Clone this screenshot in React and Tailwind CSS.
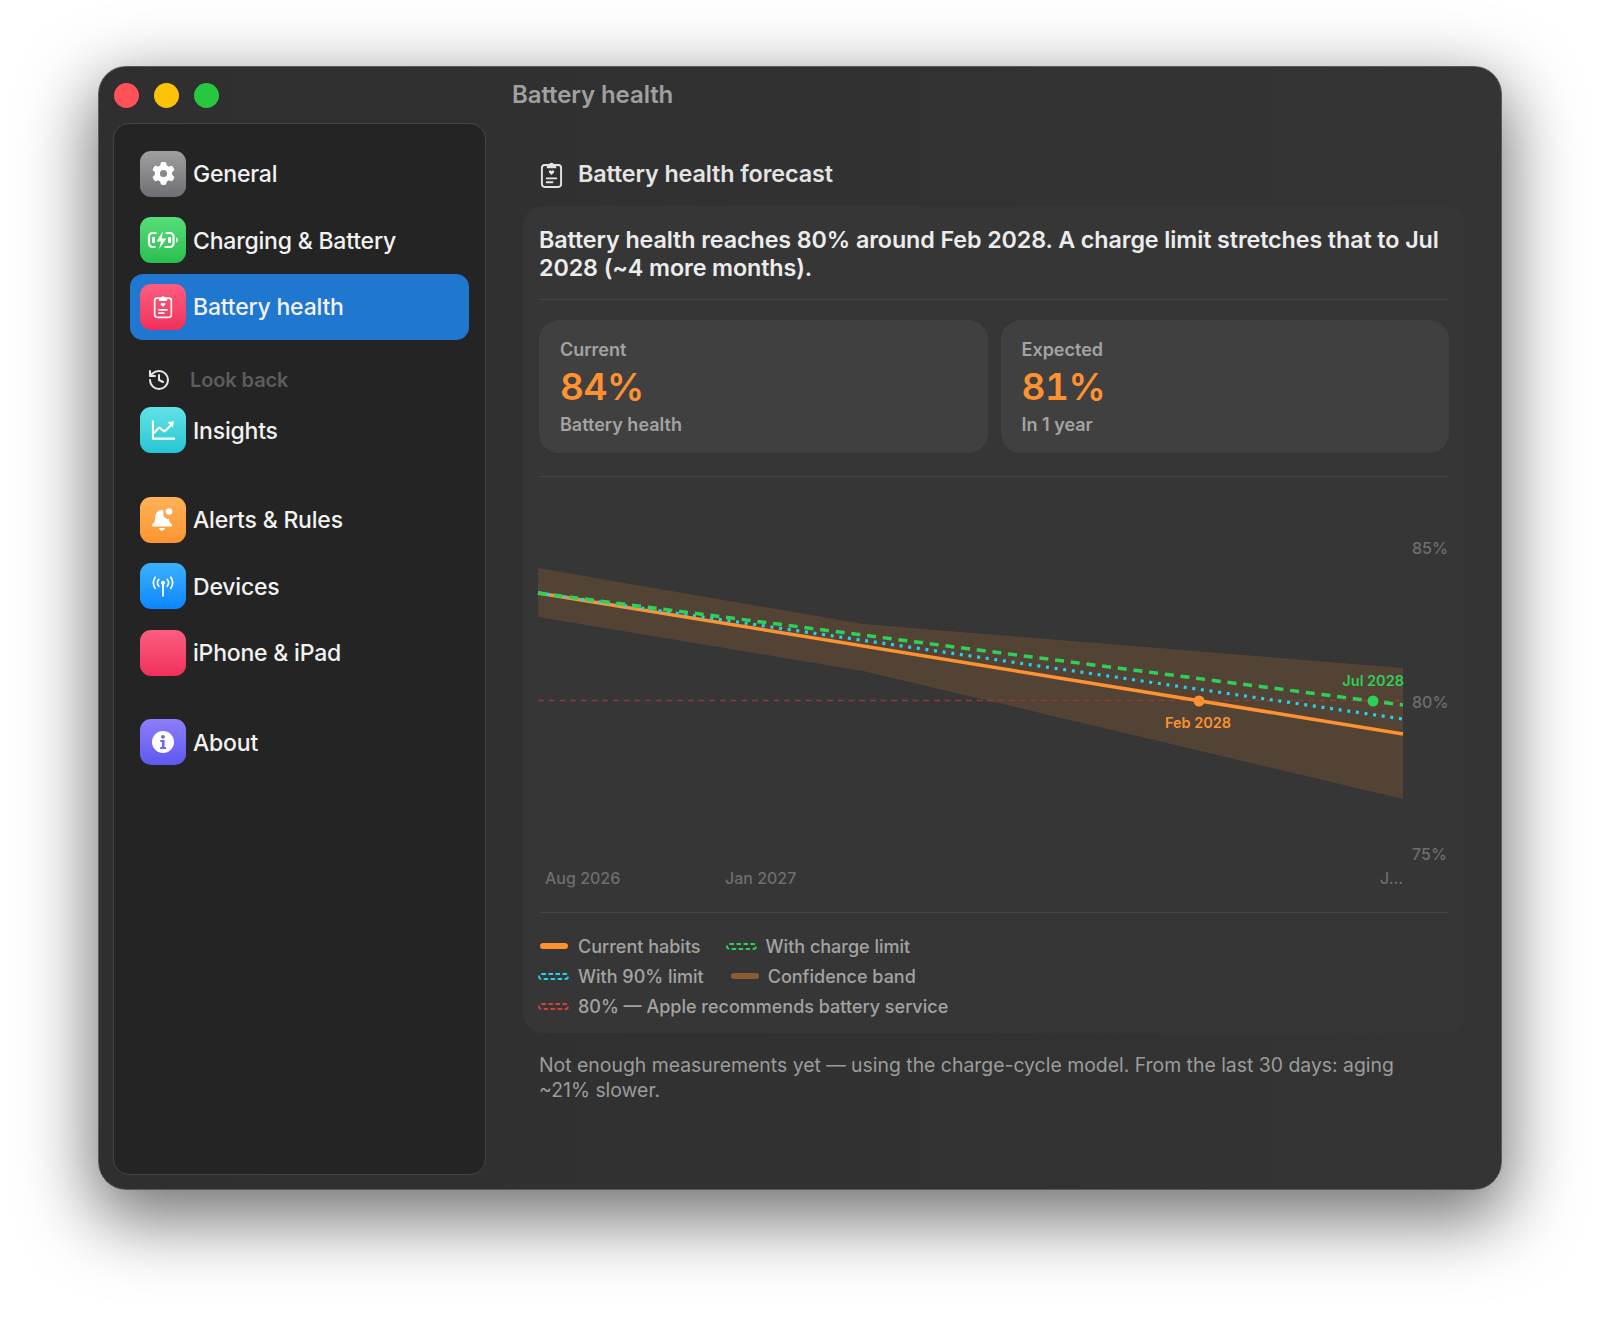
import React from "react";
import { FaGear } from "react-icons/fa6";
import { History } from "lucide-react";

const ClipboardHeart = ({ className = "w-[24px] h-[30px]" }) => (
  <svg viewBox="0 0 24 30" className={className} fill="none" stroke="currentColor" strokeWidth="2" strokeLinejoin="round" strokeLinecap="round">
    <path d="M7 5H5a3 3 0 0 0-3 3v17a3 3 0 0 0 3 3h14a3 3 0 0 0 3-3V8a3 3 0 0 0-3-3h-2" />
    <path d="M8 7.5V5h2.2a1.9 1.9 0 0 1 3.6 0H16v2.5z" fill="currentColor" />
    <path d="M12 15.5l-2.6-2.5a1.5 1.5 0 0 1 2.2-2l.4.4.4-.4a1.5 1.5 0 0 1 2.2 2z" fill="currentColor" stroke="none" />
    <path d="M7 19h10M7 23h6" />
  </svg>
);

const BatteryBolt = () => (
  <svg viewBox="0 0 34 20" className="w-[35px] h-[20px]" fill="none">
    <path d="M10 3H6a3.5 3.5 0 0 0-3.5 3.5v7A3.5 3.5 0 0 0 6 17h3M19 3h4.5A3.5 3.5 0 0 1 27 6.500v7a3.5 3.5 0 0 1-3.500 3.500H18" stroke="#fff" strokeWidth="2.200" />
    <path d="M7 7v6M23 7v6" stroke="#fff" strokeWidth="3" />
    <path d="M16.500 1L10 11.500h4.500L12.500 19 20 8.500h-4.800z" fill="#fff" />
    <path d="M29.500 7.500c1.300.4 2 1.300 2 2.500s-.7 2.100-2 2.500z" fill="#fff" />
  </svg>
);

const ChartUp = () => (
  <svg viewBox="0 0 26 22" className="w-[25px] h-[22px]" fill="none" stroke="#fff" strokeWidth="2.200" strokeLinejoin="round">
    <path d="M2 1v19h23" />
    <path d="M3 14l5.500-5.500 5.500 4L22 5" />
    <path d="M24 2l-7 .8 5.800 5.500z" fill="#fff" stroke="none" />
  </svg>
);

const BellBadge = () => (
  <svg viewBox="0 0 24 25" className="w-[24px] h-[25px]" fill="#fff">
    <path d="M11 3c-4.200 0-6.500 3-6.800 7l-.3 3.500c-.1 1.500-1.300 2.600-2.600 3.800-.9.900-.4 2.200.8 2.200h17.800c1.200 0 1.700-1.300.8-2.200-1.300-1.200-2.400-2.300-2.600-3.800l-.1-1.500c-3.500.2-6.200-2.700-5.700-6C12.500 4 13 3 11 3z" />
    <path d="M8 21h6c-.4 1.700-1.600 2.700-3 2.700S8.400 22.700 8 21z" />
    <circle cx="18" cy="4.500" r="3.300" />
  </svg>
);

const Antenna = () => (
  <svg viewBox="0 0 26 22" className="w-[24px] h-[21px]" fill="none" stroke="#fff" strokeWidth="1.800" strokeLinecap="round">
    <circle cx="13" cy="7" r="2.300" fill="#fff" stroke="none" />
    <path d="M13 8v13" strokeWidth="2" />
    <path d="M8.500 3.200a6 6 0 0 0 0 7.600M17.500 3.200a6 6 0 0 1 0 7.600" />
    <path d="M4.500 1a11 11 0 0 0 0 12M21.500 1a11 11 0 0 1 0 12" />
  </svg>
);

const InfoDisc = () => (
  <svg viewBox="0 0 22 22" className="w-[22px] h-[22px]">
    <circle cx="11" cy="11" r="11" fill="#fff" />
    <circle cx="11" cy="5.800" r="1.900" fill="#6f63f5" />
    <path d="M8.300 9h4.200v7h1.500v2H8.200v-2h1.800v-5H8.300z" fill="#6f63f5" />
  </svg>
);

const IconBox = ({ colors, children }) => (
  <div className={`flex h-[46px] w-[46px] shrink-0 items-center justify-center rounded-[11px] bg-linear-to-b ${colors}`}>
    {children}
  </div>
);

const NavRow = ({ label, colors, active, className = "", children }) => (
  <div className={`flex h-[66.5px] items-center gap-[7px] rounded-[13px] px-[10px] ${active ? "bg-[#1f77d0]" : ""} ${className}`}>
    <IconBox colors={colors}>{children}</IconBox>
    <span className="mt-[2px] text-[23px] font-medium leading-none tracking-[-0.2px] text-[#f2f2f2]">{label}</span>
  </div>
);

const Sidebar = () => (
  <aside className="ml-[14px] h-[1052px] w-[373px] shrink-0 rounded-[16px] border border-[#454545] bg-[#242424] px-[16px] pt-[16.5px]">
    <NavRow label="General" colors="from-[#a0a0a2] to-[#707074]">
      <FaGear className="text-[23px] text-white" />
    </NavRow>
    <NavRow label="Charging & Battery" colors="from-[#55de78] to-[#28bf50]">
      <BatteryBolt />
    </NavRow>
    <NavRow label="Battery health" colors="from-[#fb5c80] to-[#f22e5b]" active>
      <span className="text-white"><ClipboardHeart className="h-[27px] w-[20px]" /></span>
    </NavRow>

    <div className="mt-[22px] flex h-[35px] items-center gap-[19px] pl-[17px]">
      <History className="h-[24px] w-[24px] text-[#e8e8e8]" strokeWidth={2} />
      <span className="text-[20px] font-semibold tracking-[-0.1px] text-[#5c5c5c]">Look back</span>
    </div>
    <NavRow label="Insights" colors="from-[#5fe3e8] to-[#22c6d3]">
      <ChartUp />
    </NavRow>

    <NavRow label="Alerts & Rules" colors="from-[#ffb257] to-[#fd942f]" className="mt-[23px]">
      <BellBadge />
    </NavRow>
    <NavRow label="Devices" colors="from-[#3bb0fc] to-[#0a86ff]">
      <Antenna />
    </NavRow>
    <NavRow label="iPhone & iPad" colors="from-[#fb5c80] to-[#f22e5b]" />

    <NavRow label="About" colors="from-[#8d7dfa] to-[#5f58ef]" className="mt-[23px]">
      <InfoDisc />
    </NavRow>
  </aside>
);

const StatCard = ({ label, value, note }) => (
  <div className="h-[133px] rounded-[20px] bg-[#404040] px-[21px] pt-[19px]">
    <div className="text-[18px] font-semibold leading-[22px] text-[#a3a3a3]">{label}</div>
    <div className="mt-[4px] text-[37px] font-semibold leading-[44px] tracking-[-0.5px] text-[#ff9230] tabular-nums">{value}</div>
    <div className="mt-[5px] text-[18px] font-semibold leading-[22px] text-[#a3a3a3]">{note}</div>
  </div>
);

// viewBox is in page pixels, makes the numbers easy to compare with the screenshot
const Chart = () => (
  <svg viewBox="539 477 910 435" className="h-[435px] w-[910px] overflow-visible">
    <polygon points="538,568 863,624 1403,668 1403,799 863,671 538,617" fill="#ff9230" fillOpacity="0.14" />
    <line x1="538" y1="700.500" x2="1403" y2="700.500" stroke="#8f3b3b" strokeWidth="1.300" strokeDasharray="6 4.700" />
    <line x1="538" y1="593" x2="1403" y2="734" stroke="#ff9230" strokeWidth="3.500" />
    <line x1="538" y1="593" x2="1403" y2="719" stroke="#22d3ee" strokeWidth="3.200" strokeDasharray="3 5.700" />
    <line x1="538" y1="593" x2="1403" y2="705" stroke="#2ed158" strokeWidth="3.500" strokeDasharray="9 6.800" />
    <circle cx="1199" cy="701" r="5.500" fill="#ff9230" />
    <circle cx="1373" cy="701" r="5.500" fill="#2ed158" />
    <g fontSize="14.500" fontWeight="600">
      <text x="1198" y="728" textAnchor="middle" fill="#ff9230">Feb 2028</text>
      <text x="1404" y="686" textAnchor="end" fill="#2ed158">Jul 2028</text>
    </g>
    <g fontSize="16" fontWeight="500" fill="#6e6e6e">
      <text x="1412" y="554">85%</text>
      <text x="1412" y="708">80%</text>
      <text x="1412" y="860">75%</text>
      <text x="545" y="884">Aug 2026</text>
      <text x="725" y="884">Jan 2027</text>
      <text x="1380" y="884">J...</text>
    </g>
  </svg>
);

const DashedSwatch = ({ color }) => (
  <svg viewBox="0 0 31 7" className="h-[7px] w-[31px] shrink-0" fill="none">
    <rect x="1" y="1" width="29" height="5" rx="2.500" stroke={color} strokeWidth="1.800" strokeDasharray="4.500 2.500" />
  </svg>
);

const SolidSwatch = ({ color }) => <div className={`mx-[1.500px] h-[6px] w-[28px] shrink-0 rounded-full ${color}`} />;

const LegendItem = ({ swatch, label, gap = "gap-[9px]" }) => (
  <div className={`flex items-center ${gap}`}>
    {swatch}
    <span className="text-[18px] font-medium text-[#a3a3a3]">{label}</span>
  </div>
);

const Legend = () => (
  <div className="-ml-[1px] pt-[18px] pb-[12px]">
    <div className="flex h-[30px] items-center gap-[25px]">
      <LegendItem swatch={<SolidSwatch color="bg-[#ff9230]" />} label="Current habits" />
      <LegendItem swatch={<DashedSwatch color="#2ed158" />} label="With charge limit" />
    </div>
    <div className="flex h-[30px] items-center gap-[26px]">
      <LegendItem swatch={<DashedSwatch color="#22d3ee" />} label="With 90% limit" />
      <LegendItem swatch={<SolidSwatch color="bg-[#8a5c36]" />} label="Confidence band" gap="gap-[7px]" />
    </div>
    <div className="flex h-[30px] items-center">
      <LegendItem swatch={<DashedSwatch color="#d4403f" />} label="80% — Apple recommends battery service" />
    </div>
  </div>
);

const Detail = () => (
  <main className="ml-[37px] w-[942px] pt-[37px]">
    <div className="flex h-[28px] items-center gap-[15px] pl-[17px]">
      <span className="text-[#e4e4e4]"><ClipboardHeart className="h-[29px] w-[23px]" /></span>
      <h1 className="text-[23.300px] font-semibold tracking-[-0.1px] text-[#e4e4e4]">Battery health forecast</h1>
    </div>

    <section className="mt-[18px] rounded-[20px] bg-[#363636] px-[16px] pt-[20px]">
      <p className="text-[23.300px] font-semibold leading-[28px] tracking-[-0.1px] text-[#ececec]">
        Battery health reaches 80% around Feb 2028. A charge limit stretches that to Jul 2028 (~4 more months).
      </p>
      <div className="mt-[17px] h-px bg-[#434343]" />
      <div className="mt-[20px] grid grid-cols-2 gap-[13px]">
        <StatCard label="Current" value="84%" note="Battery health" />
        <StatCard label="Expected" value="81%" note="In 1 year" />
      </div>
      <div className="mt-[23px] h-px bg-[#434343]" />
      <Chart />
      <div className="h-px bg-[#434343]" />
      <Legend />
    </section>

    <p className="mt-[20px] px-[16px] text-[19.400px] leading-[25px] text-[#9c9c9c]">
      Not enough measurements yet — using the charge-cycle model. From the last 30 days: aging ~21% slower.
    </p>
  </main>
);

export default function App() {
  return (
    <div className="flex h-screen justify-center overflow-hidden bg-white pt-[66px] font-['Inter',sans-serif]">
      <div className="h-[1124px] w-[1404px] rounded-[28px] border border-[#5a5a5a] bg-linear-to-r from-[#2f2f2f] to-[#343434] shadow-[0_24px_70px_6px_rgba(0,0,0,0.55)]">
        <header className="flex h-[56px] items-center">
          <div className="ml-[15px] flex gap-[15px]">
            <div className="h-[25px] w-[25px] rounded-full bg-[#ff5257]" />
            <div className="h-[25px] w-[25px] rounded-full bg-[#fec309]" />
            <div className="h-[25px] w-[25px] rounded-full bg-[#27c840]" />
          </div>
          <div className="ml-[293px] text-[24px] font-semibold tracking-[-0.1px] text-[#a0a0a0]">Battery health</div>
        </header>
        <div className="flex">
          <Sidebar />
          <Detail />
        </div>
      </div>
    </div>
  );
}
